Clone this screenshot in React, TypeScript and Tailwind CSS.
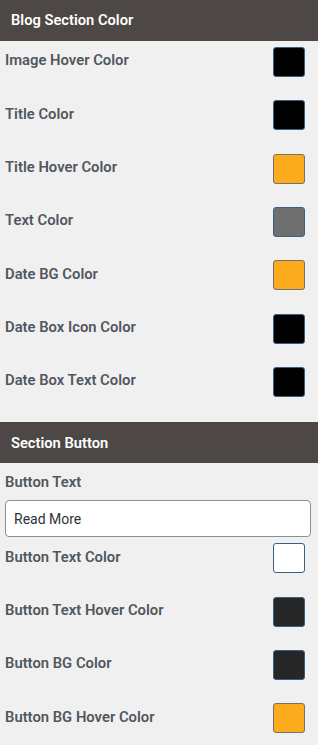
const blogColors = [
  { label: 'Image Hover Color', color: '#000000' },
  { label: 'Title Color', color: '#000000' },
  { label: 'Title Hover Color', color: '#fcab1c' },
  { label: 'Text Color', color: '#6f6f6f' },
  { label: 'Date BG Color', color: '#fcab1c' },
  { label: 'Date Box Icon Color', color: '#000000' },
  { label: 'Date Box Text Color', color: '#000000' },
];

const buttonColors = [
  { label: 'Button Text Color', color: '#ffffff' },
  { label: 'Button Text Hover Color', color: '#262626' },
  { label: 'Button BG Color', color: '#262626' },
  { label: 'Button BG Hover Color', color: '#fcab1c' },
];

function SectionHeader({ title }: { title: string }) {
  return (
    <div className="h-[41px] bg-[#4d4845] flex items-center px-[11px]">
      <h3 className="text-white text-[14.7px] font-semibold">{title}</h3>
    </div>
  );
}

function ColorRow({ label, color }: { label: string; color: string }) {
  const border = color === '#fcab1c' ? 'border-[#72726e]' : 'border-[#3f5f80]';
  return (
    <div className="flex items-center justify-between pl-[5px] pr-[13px] h-[30px] mb-[23.33px]">
      <span className="text-[14.8px] font-semibold text-[#50575e] -mt-[3px]">{label}</span>
      <span
        className={`w-[32px] h-[30px] rounded-[3px] border ${border}`}
        style={{ backgroundColor: color }}
      />
    </div>
  );
}

export default function App() {
  return (
    <div className="w-[318px] min-h-[745px] bg-[#f0f0f0] font-['Roboto',sans-serif]">
      <SectionHeader title="Blog Section Color" />
      <div className="pt-[6px]">
        {blogColors.map(c => (
          <ColorRow key={c.label} label={c.label} color={c.color} />
        ))}
      </div>
      <div className="h-[2px]" />
      <SectionHeader title="Section Button" />
      <div className="pt-[9px]">
        <div className="pl-[5px] text-[14.8px] font-semibold text-[#50575e] leading-[20px]">Button Text</div>
        <div className="pl-[5px] pr-[7px] pt-[8px] pb-[6px]">
          <input
            readOnly
            value="Read More"
            className="w-full h-[37px] bg-white border border-[#8c8f94] rounded-[4px] px-[8px] text-[14px] text-[#2c3338] outline-none"
          />
        </div>
        {buttonColors.map(c => (
          <ColorRow key={c.label} label={c.label} color={c.color} />
        ))}
      </div>
    </div>
  );
}
